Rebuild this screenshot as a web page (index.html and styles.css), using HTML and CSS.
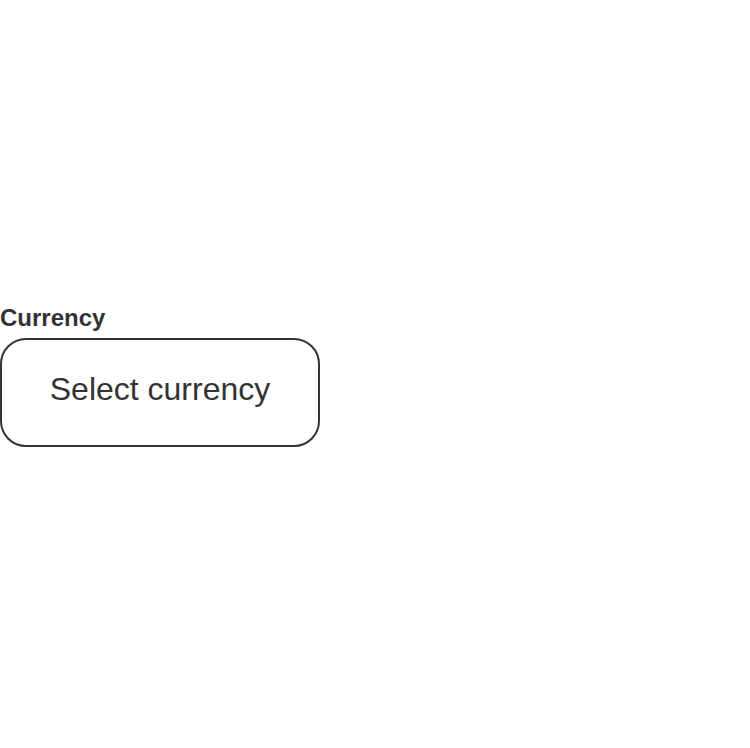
FILE: index.html
```html
<!DOCTYPE html>
<html>
<head>
<meta charset="utf-8">
<link rel="stylesheet" href="styles.css">
</head>
<body>
<div class="page">
  <div class="field">
    <label class="label">Currency</label>
    <div class="select">Select currency</div>
  </div>
</div>
</body>
</html>
```
FILE: styles.css
```css
html, body {
  margin: 0;
  padding: 0;
  background: #fff;
}
.page {
  box-sizing: border-box;
  height: 748px;
  padding-top: 3px;
  display: flex;
  flex-direction: column;
  justify-content: center;
  align-items: flex-start;
  font-family: "Liberation Sans", Arial, sans-serif;
  color: #333;
}
.field {
  display: flex;
  flex-direction: column;
  gap: 6px;
  width: 320px;
}
.label {
  font-size: 24px;
  font-weight: bold;
  color: #333;
}
.select {
  box-sizing: border-box;
  height: 109px;
  border: 2px solid #333;
  border-radius: 26px;
  display: flex;
  align-items: center;
  justify-content: center;
  font-size: 32px;
  color: #333;
  padding-bottom: 6px;
}
```
